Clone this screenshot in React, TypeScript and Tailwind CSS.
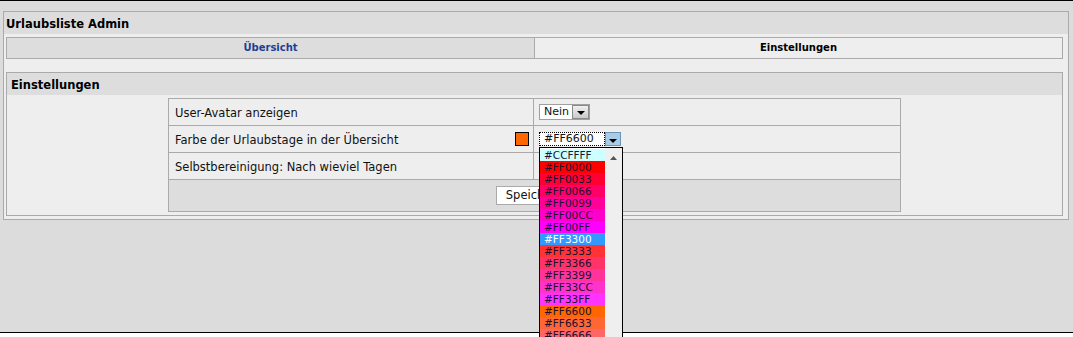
import React from 'react'

const colors: { hex: string; bg: string; active?: boolean }[] = [
  { hex: '#CCFFFF', bg: 'bg-[#ccffff]' },
  { hex: '#FF0000', bg: 'bg-[#ff0000]' },
  { hex: '#FF0033', bg: 'bg-[#ff0033]' },
  { hex: '#FF0066', bg: 'bg-[#ff0066]' },
  { hex: '#FF0099', bg: 'bg-[#ff0099]' },
  { hex: '#FF00CC', bg: 'bg-[#ff00cc]' },
  { hex: '#FF00FF', bg: 'bg-[#ff00ff]' },
  { hex: '#FF3300', bg: 'bg-[#3399ff]', active: true },
  { hex: '#FF3333', bg: 'bg-[#ff3333]' },
  { hex: '#FF3366', bg: 'bg-[#ff3366]' },
  { hex: '#FF3399', bg: 'bg-[#ff3399]' },
  { hex: '#FF33CC', bg: 'bg-[#ff33cc]' },
  { hex: '#FF33FF', bg: 'bg-[#ff33ff]' },
  { hex: '#FF6600', bg: 'bg-[#ff6600]' },
  { hex: '#FF6633', bg: 'bg-[#ff6633]' },
  { hex: '#FF6666', bg: 'bg-[#ff6666]' },
]

function Arrow() {
  return (
    <svg width="8" height="5" viewBox="0 0 8 5">
      <path d="M0 0h8L4 4z" fill="#000" />
    </svg>
  )
}

function NeinSelect() {
  return (
    <div className="inline-flex h-[16px] w-[51px] items-stretch border border-[#a0a0a0] bg-white">
      <span className="flex-1 pl-[4px] text-[11px] leading-[14px] text-[#111]">Nein</span>
      <span className="flex w-[17px] items-end justify-center border border-[#8a8a8a] bg-gradient-to-b from-[#f0f0f0] to-[#c9c9c9] pb-[2px]">
        <Arrow />
      </span>
    </div>
  )
}

function ColorSelect() {
  return (
    <div className="relative">
      <div className="flex h-[14px] w-[82px] items-stretch">
        <span className="flex-1 border border-dotted border-black bg-white pl-[4px] text-[11px] leading-[12px] text-[#111]">
          #FF6600
        </span>
        <span className="flex w-[16px] items-end justify-center border border-[#6d93b5] bg-[#a8cbe8] pb-[1px]">
          <Arrow />
        </span>
      </div>
      <div className="absolute left-0 top-[15px] z-10 flex border border-black bg-white">
        <div className="w-[65px] pt-[1px]">
          {colors.map(c => (
            <div
              key={c.hex}
              className={`h-[12px] pl-[4px] text-[10.5px] leading-[12px] ${c.bg} ${
                c.active ? 'text-white' : 'text-[#1d1030]'
              }`}
            >
              {c.hex}
            </div>
          ))}
        </div>
        <div className="flex w-[17px] justify-center bg-[#efefef] pt-[8px]">
          <svg width="7" height="4" viewBox="0 0 7 4">
            <path d="M0 4h7L3.5 0z" fill="#555" />
          </svg>
        </div>
      </div>
    </div>
  )
}

export default function App() {
  return (
    <div className="h-[337px] w-[1073px] overflow-hidden bg-white font-['DejaVu_Sans',Verdana,sans-serif]">
      <div className="h-[333px] border-y border-black bg-[#dcdcdc] pl-[3px] pt-[10px]">
        <div className="w-[1066px] border border-[#aaaaaa] bg-[#eeeeee] pb-[3px]">
          <div className="h-[22px] bg-[#dddddd] pl-[2px] pt-[1px] text-[11.5px] font-bold leading-[22px] text-black">
            Urlaubsliste Admin
          </div>

          <div className="pl-[2px] pt-[3px]">
            <div className="flex h-[22px] w-[1057px] border border-[#aaaaaa] text-[10px] font-bold leading-[20px]">
              <div className="w-[528px] border-r border-[#aaaaaa] bg-[#dddddd] text-center text-[#1d3f94]">
                Übersicht
              </div>
              <div className="flex-1 bg-[#eeeeee] text-center text-black">Einstellungen</div>
            </div>

            <div className="mt-[13px] w-[1057px] border border-[#aaaaaa] pb-[3px]">
              <div className="h-[22px] bg-[#dddddd] pl-[4px] pt-[1px] text-[11.5px] font-bold leading-[22px] text-black">
                Einstellungen
              </div>
              <div className="pt-[3px]">
                <div className="mx-auto w-[733px] border border-[#aaaaaa] text-[11.5px] text-[#111]">
                  <div className="flex h-[26px]">
                    <div className="flex w-[365px] items-center border-r border-[#aaaaaa] pl-[6px] pt-[3px]">
                      User-Avatar anzeigen
                    </div>
                    <div className="flex flex-1 items-center pl-[5px]">
                      <NeinSelect />
                    </div>
                  </div>
                  <div className="flex h-[27px] border-t border-[#aaaaaa]">
                    <div className="flex w-[365px] items-center justify-between border-r border-[#aaaaaa] pl-[6px] pr-[4px]">
                      <span className="pt-[3px]">Farbe der Urlaubstage in der Übersicht</span>
                      <span className="h-[14px] w-[14px] border border-black bg-[#ff6600]" />
                    </div>
                    <div className="flex flex-1 items-center pl-[5px]">
                      <ColorSelect />
                    </div>
                  </div>
                  <div className="flex h-[27px] border-t border-[#aaaaaa]">
                    <div className="flex w-[365px] items-center border-r border-[#aaaaaa] pl-[6px] pt-[3px]">
                      Selbstbereinigung: Nach wieviel Tagen
                    </div>
                    <div className="flex-1" />
                  </div>
                  <div className="flex h-[32px] items-center justify-center border-t border-[#aaaaaa] bg-[#dddddd]">
                    <button className="h-[19px] w-[77px] border border-[#aaaaaa] bg-white text-[11.5px] leading-[17px] text-[#111]">
                      Speichern
                    </button>
                  </div>
                </div>
              </div>
            </div>
          </div>
        </div>
      </div>
    </div>
  )
}
